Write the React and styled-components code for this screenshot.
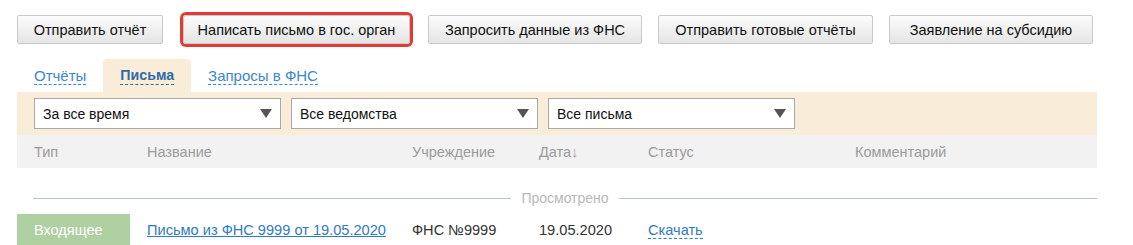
import React from "react";
import styled, {createGlobalStyle, css} from "styled-components";

const GlobalStyle = createGlobalStyle`
  body {
    margin: 0;
    background: #ffffff;
    font-family: "Liberation Sans", Arial, sans-serif;
    font-size: 14px;
    color: #222222;
  }
`

export const Page = styled.div`
  width: 1080px;
  margin-left: 17px;
  padding-top: 15px;
`

export const Toolbar = styled.div`
  display: flex;
  align-items: center;
  gap: 16px;
`

export const ActionButton = styled.button`
  width: ${props => props.w}px;
  height: 29px;
  padding: 0;
  border: 1px solid #c9c9c9;
  border-radius: 2px;
  background: linear-gradient(to bottom, #fbfbfb, #e5e5e5);
  font-family: "Liberation Sans", Arial, sans-serif;
  font-size: 14.5px;
  color: #111111;
  cursor: pointer;
  white-space: nowrap;
  ${props => props.highlighted && css`
    margin: 0 2px 0 4px;
    box-shadow: 0 0 0 3px #e23b35;
    border-radius: 3px;
  `}
`

export const Tabs = styled.div`
  display: flex;
  margin-top: 15px;
  height: 33px;
`

export const Tab = styled.div`
  display: flex;
  align-items: center;
  padding: 0 17px;
  border-radius: 4px 4px 0 0;
  cursor: pointer;
  background: ${props => props.active ? "#f9ecd9" : "transparent"};
`

export const TabLabel = styled.span`
  font-size: ${props => props.active ? "14.2px" : "15px"};
  line-height: 17px;
  color: ${props => props.active ? "#2d6ca8" : "#3b86cf"};
  font-weight: ${props => props.active ? "bold" : "normal"};
  border-bottom: 1px dashed ${props => props.active ? "#2d6ca8" : "#3b86cf"};
`

export const FilterBar = styled.div`
  display: flex;
  gap: 10px;
  padding: 6px 17px;
  background: #f9ecd9;
`

export const Select = styled.div`
  width: 247px;
  height: 31px;
  box-sizing: border-box;
  border: 1px solid #a9a9a9;
  background: #ffffff;
  display: flex;
  align-items: center;
  justify-content: space-between;
  padding: 0 8px 0 8px;
  font-size: 14px;
  color: #111111;
  cursor: pointer;
`

const Arrow = () => (
    <svg width="12" height="9" viewBox="0 0 12 9">
        <polygon points="0,0 12,0 6,9" fill="#555555"/>
    </svg>
)

const columns = "113px 265px 127px 109px 207px 1fr";

export const HeaderRow = styled.div`
  display: grid;
  grid-template-columns: ${columns};
  height: 33px;
  align-items: center;
  background: #f2f2f2;
`

export const HeaderCell = styled.div`
  padding-left: 17px;
  color: #9b9b9b;
  font-size: 14.5px;
`

export const Divider = styled.div`
  display: flex;
  align-items: center;
  gap: 10px;
  margin: 22px 0 0 16px;
  font-size: 14px;
  color: #b8b8b8;

  &::before, &::after {
    content: "";
    flex: 1;
    height: 1px;
    background: #b3c5c6;
  }
`

export const Row = styled.div`
  display: grid;
  grid-template-columns: ${columns};
  align-items: center;
  margin-top: 8px;
  height: 31px;
`

export const Badge = styled.div`
  height: 31px;
  display: flex;
  align-items: center;
  padding-left: 17px;
  background: #afd0a1;
  color: #ffffff;
  font-size: 14.5px;
`

export const Cell = styled.div`
  padding-left: 17px;
  font-size: 14.6px;
  color: #333333;
`

export const Link = styled.a`
  color: #2f7bc4;
  text-decoration: underline;
  cursor: pointer;
`

export const DashedLink = styled.a`
  color: #2f7bc4;
  text-decoration: none;
  border-bottom: 1px dashed #2f7bc4;
  cursor: pointer;
`

const buttons = [
    {label: "Отправить отчёт", w: 146},
    {label: "Написать письмо в гос. орган", w: 227},
    {label: "Запросить данные из ФНС", w: 214},
    {label: "Отправить готовые отчёты", w: 215},
    {label: "Заявление на субсидию", w: 204},
];
const tabs = ["Отчёты", "Письма", "Запросы в ФНС"];
const filters = ["За все время", "Все ведомства", "Все письма"];
const headers = ["Тип", "Название", "Учреждение", "Дата↓", "Статус", "Комментарий"];

export default function App() {
    return (<>
        <GlobalStyle/>
        <Page>
            <Toolbar>
                {buttons.map((b, i) => <ActionButton key={b.label} w={b.w} highlighted={i === 1}>{b.label}</ActionButton>)}
            </Toolbar>
            <Tabs>
                {tabs.map((t, i) => <Tab key={t} active={i === 1}><TabLabel active={i === 1}>{t}</TabLabel></Tab>)}
            </Tabs>
            <FilterBar>
                {filters.map(f => <Select key={f}><span>{f}</span><Arrow/></Select>)}
            </FilterBar>
            <HeaderRow>
                {headers.map(h => <HeaderCell key={h}>{h}</HeaderCell>)}
            </HeaderRow>
            <Divider>Просмотрено</Divider>
            <Row>
                <Badge>Входящее</Badge>
                <Cell><Link>Письмо из ФНС 9999 от 19.05.2020</Link></Cell>
                <Cell>ФНС №9999</Cell>
                <Cell>19.05.2020</Cell>
                <Cell><DashedLink>Скачать</DashedLink></Cell>
                <Cell/>
            </Row>
        </Page>
    </>)
}
